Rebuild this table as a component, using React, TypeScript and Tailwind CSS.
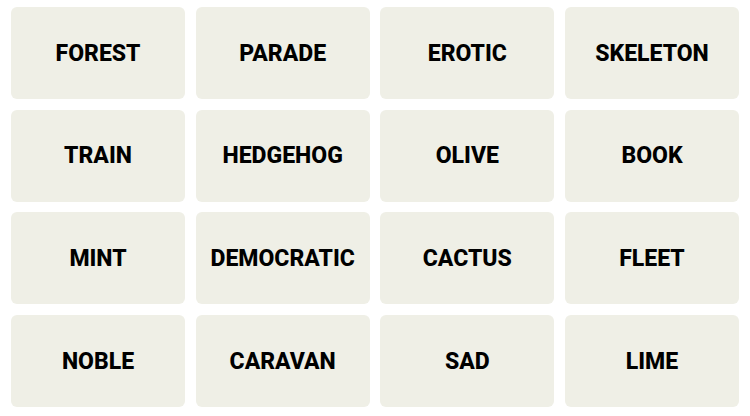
import React from 'react';

const words = [
  'FOREST', 'PARADE', 'EROTIC', 'SKELETON',
  'TRAIN', 'HEDGEHOG', 'OLIVE', 'BOOK',
  'MINT', 'DEMOCRATIC', 'CACTUS', 'FLEET',
  'NOBLE', 'CARAVAN', 'SAD', 'LIME',
];

export default function App() {
  return (
    <div className="w-[750px] h-[416px] bg-white pt-[7px] pl-[11px]">
      <div className="grid w-[728px] grid-cols-4 gap-[10.67px]" style={{ fontFamily: 'Roboto, "Liberation Sans", sans-serif' }}>
        {words.map((w) => (
          <button
            key={w}
            className="flex h-[92px] items-center justify-center rounded-md bg-[#efefe6] pt-[2px] text-[23px] font-extrabold text-black"
          >
            {w}
          </button>
        ))}
      </div>
    </div>
  );
}
